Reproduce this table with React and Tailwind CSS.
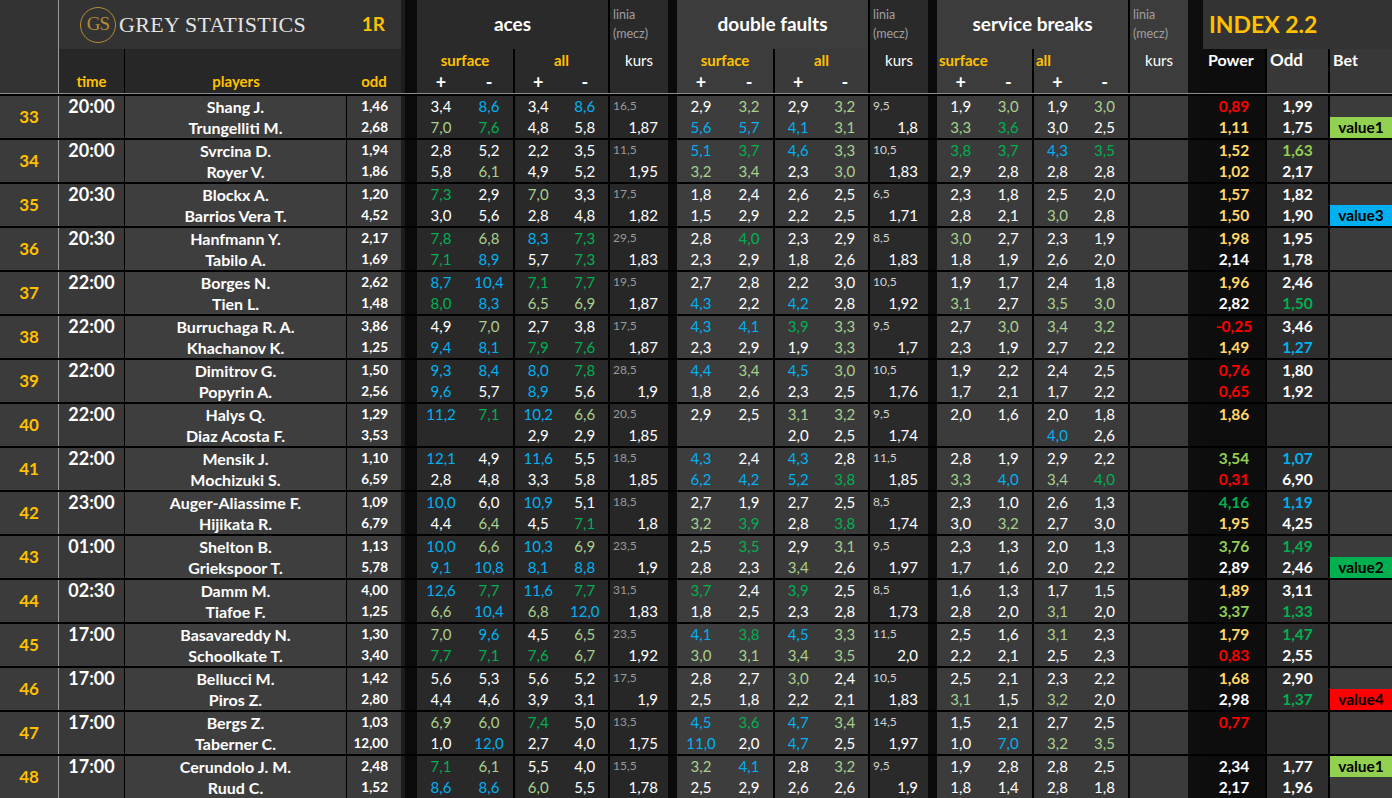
import React from "react";

const tone = {
  w: "text-white",
  b: "text-[#00b0f0]",
  l: "text-[#a9d08e]",
  g: "text-[#00b050]",
  r: "text-[#ff0000]",
  y: "text-[#ffd966]",
  k: "text-[#92d050]",
};

const betBg = {
  value1: "bg-[#92d050]",
  value2: "bg-[#00b050]",
  value3: "bg-[#00b0f0]",
  value4: "bg-[#ff0000]",
};

const matches = [
  { n: 33, time: "20:00", players: ["Shang J.", "Trungelliti M."], odd: ["1,46", "2,68"],
    aces: ["3,4w 8,6b 3,4w 8,6b", "7,0l 7,6g 4,8w 5,8w"], acesLine: ["16,5", "1,87"],
    df: ["2,9w 3,2l 2,9w 3,2l", "5,6b 5,7b 4,1b 3,1l"], dfLine: ["9,5", "1,8"],
    sb: ["1,9w 3,0l 1,9w 3,0l", "3,3l 3,6g 3,0w 2,5w"],
    power: ["0,89r", "1,11y"], index: ["1,99w", "1,75w"], bet: ["", "value1"] },
  { n: 34, time: "20:00", players: ["Svrcina D.", "Royer V."], odd: ["1,94", "1,86"],
    aces: ["2,8w 5,2w 2,2w 3,5w", "5,8w 6,1l 4,9w 5,2w"], acesLine: ["11,5", "1,95"],
    df: ["5,1b 3,7g 4,6b 3,3l", "3,2l 3,4l 2,3w 3,0l"], dfLine: ["10,5", "1,83"],
    sb: ["3,8g 3,7g 4,3b 3,5g", "2,9w 2,8w 2,8w 2,8w"],
    power: ["1,52y", "1,02y"], index: ["1,63k", "2,17w"], bet: ["", ""] },
  { n: 35, time: "20:30", players: ["Blockx A.", "Barrios Vera T."], odd: ["1,20", "4,52"],
    aces: ["7,3g 2,9w 7,0l 3,3w", "3,0w 5,6w 2,8w 4,8w"], acesLine: ["17,5", "1,82"],
    df: ["1,8w 2,4w 2,6w 2,5w", "1,5w 2,9w 2,2w 2,5w"], dfLine: ["6,5", "1,71"],
    sb: ["2,3w 1,8w 2,5w 2,0w", "2,8w 2,1w 3,0l 2,8w"],
    power: ["1,57y", "1,50y"], index: ["1,82w", "1,90w"], bet: ["", "value3"] },
  { n: 36, time: "20:30", players: ["Hanfmann Y.", "Tabilo A."], odd: ["2,17", "1,69"],
    aces: ["7,8g 6,8l 8,3b 7,3g", "7,1g 8,9b 5,7w 7,3g"], acesLine: ["29,5", "1,83"],
    df: ["2,8w 4,0g 2,3w 2,9w", "2,3w 2,9w 1,8w 2,6w"], dfLine: ["8,5", "1,83"],
    sb: ["3,0l 2,7w 2,3w 1,9w", "1,8w 1,9w 2,6w 2,0w"],
    power: ["1,98y", "2,14w"], index: ["1,95w", "1,78w"], bet: ["", ""] },
  { n: 37, time: "22:00", players: ["Borges N.", "Tien L."], odd: ["2,62", "1,48"],
    aces: ["8,7b 10,4b 7,1g 7,7g", "8,0g 8,3b 6,5l 6,9l"], acesLine: ["19,5", "1,87"],
    df: ["2,7w 2,8w 2,2w 3,0w", "4,3b 2,2w 4,2b 2,8w"], dfLine: ["10,5", "1,92"],
    sb: ["1,9w 1,7w 2,4w 1,8w", "3,1l 2,7w 3,5l 3,0l"],
    power: ["1,96y", "2,82w"], index: ["2,46w", "1,50g"], bet: ["", ""] },
  { n: 38, time: "22:00", players: ["Burruchaga R. A.", "Khachanov K."], odd: ["3,86", "1,25"],
    aces: ["4,9w 7,0l 2,7w 3,8w", "9,4b 8,1b 7,9g 7,6g"], acesLine: ["17,5", "1,87"],
    df: ["4,3b 4,1b 3,9g 3,3l", "2,3w 2,9w 1,9w 3,3l"], dfLine: ["9,5", "1,7"],
    sb: ["2,7w 3,0l 3,4l 3,2l", "2,3w 1,9w 2,7w 2,2w"],
    power: ["-0,25r", "1,49y"], index: ["3,46w", "1,27b"], bet: ["", ""] },
  { n: 39, time: "22:00", players: ["Dimitrov G.", "Popyrin A."], odd: ["1,50", "2,56"],
    aces: ["9,3b 8,4b 8,0b 7,8g", "9,6b 5,7w 8,9b 5,6w"], acesLine: ["28,5", "1,9"],
    df: ["4,4b 3,4l 4,5b 3,0l", "1,8w 2,6w 2,3w 2,5w"], dfLine: ["10,5", "1,76"],
    sb: ["1,9w 2,2w 2,4w 2,5w", "1,7w 2,1w 1,7w 2,2w"],
    power: ["0,76r", "0,65r"], index: ["1,80w", "1,92w"], bet: ["", ""] },
  { n: 40, time: "22:00", players: ["Halys Q.", "Diaz Acosta F."], odd: ["1,29", "3,53"],
    aces: ["11,2b 7,1g 10,2b 6,6l", "_ _ 2,9w 2,9w"], acesLine: ["20,5", "1,85"],
    df: ["2,9w 2,5w 3,1l 3,2l", "_ _ 2,0w 2,5w"], dfLine: ["9,5", "1,74"],
    sb: ["2,0w 1,6w 2,0w 1,8w", "_ _ 4,0b 2,6w"],
    power: ["1,86y", ""], index: ["", ""], bet: ["", ""] },
  { n: 41, time: "22:00", players: ["Mensik J.", "Mochizuki S."], odd: ["1,10", "6,59"],
    aces: ["12,1b 4,9w 11,6b 5,5w", "2,8w 4,8w 3,3w 5,8w"], acesLine: ["18,5", "1,85"],
    df: ["4,3b 2,4w 4,3b 2,8w", "6,2b 4,2b 5,2b 3,8g"], dfLine: ["11,5", "1,85"],
    sb: ["2,8w 1,9w 2,9w 2,2w", "3,3l 4,0b 3,4l 4,0g"],
    power: ["3,54k", "0,31r"], index: ["1,07b", "6,90w"], bet: ["", ""] },
  { n: 42, time: "23:00", players: ["Auger-Aliassime F.", "Hijikata R."], odd: ["1,09", "6,79"],
    aces: ["10,0b 6,0w 10,9b 5,1w", "4,4w 6,4l 4,5w 7,1g"], acesLine: ["18,5", "1,8"],
    df: ["2,7w 1,9w 2,7w 2,5w", "3,2l 3,9g 2,8w 3,8g"], dfLine: ["8,5", "1,74"],
    sb: ["2,3w 1,0w 2,6w 1,3w", "3,0w 3,2l 2,7w 3,0w"],
    power: ["4,16g", "1,95y"], index: ["1,19b", "4,25w"], bet: ["", ""] },
  { n: 43, time: "01:00", players: ["Shelton B.", "Griekspoor T."], odd: ["1,13", "5,78"],
    aces: ["10,0b 6,6l 10,3b 6,9l", "9,1b 10,8b 8,1b 8,8b"], acesLine: ["23,5", "1,9"],
    df: ["2,5w 3,5g 2,9w 3,1l", "2,8w 2,3w 3,4l 2,6w"], dfLine: ["9,5", "1,97"],
    sb: ["2,3w 1,3w 2,0w 1,3w", "1,7w 1,6w 2,0w 2,2w"],
    power: ["3,76k", "2,89w"], index: ["1,49g", "2,46w"], bet: ["", "value2"] },
  { n: 44, time: "02:30", players: ["Damm M.", "Tiafoe F."], odd: ["4,00", "1,25"],
    aces: ["12,6b 7,7g 11,6b 7,7g", "6,6l 10,4b 6,8l 12,0b"], acesLine: ["31,5", "1,83"],
    df: ["3,7g 2,4w 3,9g 2,5w", "1,8w 2,5w 2,3w 2,8w"], dfLine: ["8,5", "1,73"],
    sb: ["1,6w 1,3w 1,7w 1,5w", "2,8w 2,0w 3,1l 2,0w"],
    power: ["1,89y", "3,37k"], index: ["3,11w", "1,33g"], bet: ["", ""] },
  { n: 45, time: "17:00", players: ["Basavareddy N.", "Schoolkate T."], odd: ["1,30", "3,40"],
    aces: ["7,0l 9,6b 4,5w 6,5l", "7,7g 7,1g 7,6g 6,7l"], acesLine: ["23,5", "1,92"],
    df: ["4,1b 3,8g 4,5b 3,3l", "3,0l 3,1l 3,4l 3,5l"], dfLine: ["11,5", "2,0"],
    sb: ["2,5w 1,6w 3,1l 2,3w", "2,2w 2,1w 2,5w 2,3w"],
    power: ["1,79y", "0,83r"], index: ["1,47g", "2,55w"], bet: ["", ""] },
  { n: 46, time: "17:00", players: ["Bellucci M.", "Piros Z."], odd: ["1,42", "2,80"],
    aces: ["5,6w 5,3w 5,6w 5,2w", "4,4w 4,6w 3,9w 3,1w"], acesLine: ["17,5", "1,9"],
    df: ["2,8w 2,7w 3,0l 2,4w", "2,5w 1,8w 2,2w 2,1w"], dfLine: ["10,5", "1,83"],
    sb: ["2,5w 2,1w 2,3w 2,2w", "3,1l 1,5w 3,2l 2,0w"],
    power: ["1,68y", "2,98w"], index: ["2,90w", "1,37g"], bet: ["", "value4"] },
  { n: 47, time: "17:00", players: ["Bergs Z.", "Taberner C."], odd: ["1,03", "12,00"],
    aces: ["6,9l 6,0l 7,4g 5,0w", "1,0w 12,0b 2,7w 4,0w"], acesLine: ["13,5", "1,75"],
    df: ["4,5b 3,6g 4,7b 3,4l", "11,0b 2,0w 4,7b 2,5w"], dfLine: ["14,5", "1,97"],
    sb: ["1,5w 2,1w 2,7w 2,5w", "1,0w 7,0b 3,2l 3,5l"],
    power: ["0,77r", ""], index: ["", ""], bet: ["", ""] },
  { n: 48, time: "17:00", players: ["Cerundolo J. M.", "Ruud C."], odd: ["2,48", "1,52"],
    aces: ["7,1g 6,1l 5,5w 4,0w", "8,6b 8,6b 6,0l 5,5w"], acesLine: ["15,5", "1,78"],
    df: ["3,2l 4,1b 2,8w 3,2l", "2,5w 2,9w 2,6w 2,6w"], dfLine: ["9,5", "1,9"],
    sb: ["1,9w 2,8w 2,8w 2,5w", "1,8w 1,4w 2,8w 1,8w"],
    power: ["2,34w", "2,17w"], index: ["1,77w", "1,96w"], bet: ["value1", ""] },
];

function Num({ t, className = "" }) {
  if (!t || t === "_") return <div className={className} />;
  return <div className={`${className} ${tone[t.slice(-1)]}`}>{t.slice(0, -1)}</div>;
}

// two columns (+ / -) of one stat half, two player lines
function Pair({ lines, half, className }) {
  return (
    <div className={`flex flex-col ${className}`}>
      {lines.map((line, i) => (
        <div key={i} className="flex h-[21px] leading-[21px] text-[15px]">
          {line.split(" ").slice(half * 2, half * 2 + 2).map((t, j) => (
            <Num key={j} t={t} className="flex-1 text-center" />
          ))}
        </div>
      ))}
    </div>
  );
}

function Linia({ vals, top, className }) {
  return (
    <div className={`flex w-[60px] flex-col border-l-2 border-black ${className}`}>
      <div className={`h-[21px] pl-[3px] text-[12px] leading-[19px] ${top}`}>{vals[0]}</div>
      <div className="h-[21px] pr-[10px] text-right text-[15px] leading-[21px] text-white">{vals[1]}</div>
    </div>
  );
}

function MatchRow({ m }) {
  return (
    <div className="flex h-[44px] border-t-2 border-black">
      <div className="flex w-[59px] items-center justify-center border-r border-[#9a9a9a] bg-[#3b3b3b] text-[17px] font-bold text-[#ffc000]">
        {m.n}
      </div>
      <div className="w-[66px] border-r border-black bg-[#393939] text-center text-[18px] font-bold leading-[21px] text-white">
        {m.time}
      </div>
      <div className="flex w-[222px] flex-col border-r border-black bg-[#3e3e3e] text-center text-[16px] font-bold text-white">
        {m.players.map((p) => (
          <div key={p} className="h-[21px] leading-[21px]">{p}</div>
        ))}
      </div>
      <div className="flex w-[54px] flex-col bg-[#3b3b3b] pr-[13px] text-right text-[13.5px] font-bold text-white">
        {m.odd.map((o, i) => (
          <div key={i} className="h-[21px] leading-[21px]">{o}</div>
        ))}
      </div>
      <div className="w-[16px] border-l-4 border-[#1c1c1c] bg-[#0a0a0a]" />

      <Pair lines={m.aces} half={0} className="w-[96px] bg-[#292929]" />
      <Pair lines={m.aces} half={1} className="w-[95px] border-l-2 border-black bg-[#292929]" />
      <Linia vals={m.acesLine} top="text-[#9a9a9a]" className="bg-[#272727]" />
      <div className="w-[9px] bg-[#0a0a0a]" />

      <Pair lines={m.df} half={0} className="w-[96px] bg-[#3d3d3d]" />
      <Pair lines={m.df} half={1} className="w-[95px] border-l-2 border-black bg-[#3a3a3a]" />
      <Linia vals={m.dfLine} top="text-[#d4d4d4]" className="bg-[#2a2a2a]" />
      <div className="w-[9px] bg-[#0a0a0a]" />

      <Pair lines={m.sb} half={0} className="w-[95px] bg-[#3b3b3b]" />
      <Pair lines={m.sb} half={1} className="w-[96px] border-l-2 border-black bg-[#3b3b3b]" />
      <div className="w-[60px] border-l-2 border-black bg-[#3b3b3b]" />
      <div className="w-[15px] bg-[#0e0e0e]" />

      <div className="flex w-[62px] flex-col bg-[#0d0d0d] text-[15.5px] font-bold">
        {m.power.map((t, i) => (
          <Num key={i} t={t} className="h-[21px] text-center leading-[21px]" />
        ))}
      </div>
      <div className="flex w-[63px] flex-col border-l-2 border-black bg-[#2e2e2e] text-[15.5px] font-bold">
        {m.index.map((t, i) => (
          <Num key={i} t={t} className="h-[21px] text-center leading-[21px]" />
        ))}
      </div>
      <div className="flex w-[64px] flex-col border-l-2 border-black bg-[#3b3b3b]">
        {m.bet.map((b, i) => (
          <div
            key={i}
            className={`h-[21px] text-center text-[15.5px] font-bold leading-[21px] text-black ${b ? betBg[b] : ""}`}
          >
            {b}
          </div>
        ))}
      </div>
    </div>
  );
}

function SectionHead({ title, bg, subBgs, widths, labelAlign }) {
  return (
    <div className={`flex w-[191px] flex-col ${bg}`}>
      <div className="flex h-[49px] items-center justify-center text-[19px] font-bold text-white">{title}</div>
      <div className="flex flex-1">
        {["surface", "all"].map((s, i) => (
          <div key={s} className={`flex flex-col ${widths[i]} ${subBgs[i]} ${i ? "border-l-2 border-black" : ""}`}>
            <div className={`h-[22px] text-[15px] font-bold leading-[22px] text-[#ffc000] ${labelAlign}`}>{s}</div>
            <div className="flex h-[22px] text-[18px] font-bold leading-[22px] text-white">
              <span className="flex-1 text-center">+</span>
              <span className="flex-1 text-center">-</span>
            </div>
          </div>
        ))}
      </div>
    </div>
  );
}

function LiniaHead({ bg }) {
  return (
    <div className={`flex w-[60px] flex-col border-l-2 border-black ${bg}`}>
      <div className="h-[49px] pl-[3px] pt-[5px] text-[12.5px] leading-[19px] text-[#a0a0a0]">
        linia
        <br />
        (mecz)
      </div>
      <div className="h-[22px] text-center text-[15px] leading-[22px] text-white">kurs</div>
    </div>
  );
}

function Header() {
  return (
    <div className="flex h-[94px] border-b border-[#8c8c8c]">
      <div className="w-[59px] border-r border-[#9a9a9a] bg-[#333333]" />
      <div className="flex w-[342px] flex-col">
        <div className="flex h-[49px] items-center bg-[#333333]">
          <div className="ml-[21px] flex h-[36px] w-[36px] items-center justify-center rounded-full border-[1.5px] border-[#b38d36] font-[family-name:'Liberation_Serif',serif] text-[19px] tracking-[-1px] text-[#b38d36]">
            GS
          </div>
          <span className="ml-[3px] font-[family-name:'Liberation_Serif',serif] text-[22px] tracking-[0.3px] text-[#e4e4e4]">
            GREY STATISTICS
          </span>
          <span className="ml-auto mr-[16px] text-[19px] font-bold text-[#ffc000]">1R</span>
        </div>
        <div className="flex flex-1 bg-[#272727] text-[15px] font-bold text-[#ffc000]">
          <div className="flex w-[66px] items-end justify-center border-r border-black pb-[1px]">time</div>
          <div className="flex w-[222px] items-end justify-center pb-[1px]">players</div>
          <div className="flex w-[54px] items-end justify-center pb-[1px]">odd</div>
        </div>
      </div>
      <div className="w-[16px] border-l-4 border-[#1c1c1c] bg-[#0a0a0a]" />

      <SectionHead
        title="aces"
        bg="bg-[#2a2a2a]"
        subBgs={["bg-[#2a2a2a]", "bg-[#2a2a2a]"]}
        widths={["w-[96px]", "w-[95px]"]}
        labelAlign="text-center"
      />
      <LiniaHead bg="bg-[#2a2a2a]" />
      <div className="w-[9px] bg-[#0a0a0a]" />

      <SectionHead
        title="double faults"
        bg="bg-[#3c3c3c]"
        subBgs={["bg-[#3c3c3c]", "bg-[#3a3a3a]"]}
        widths={["w-[96px]", "w-[95px]"]}
        labelAlign="text-center"
      />
      <LiniaHead bg="bg-[#2a2a2a]" />
      <div className="w-[9px] bg-[#0a0a0a]" />

      <SectionHead
        title="service breaks"
        bg="bg-[#3c3c3c]"
        subBgs={["bg-[#3c3c3c]", "bg-[#3c3c3c]"]}
        widths={["w-[95px]", "w-[96px]"]}
        labelAlign="pl-[2px] text-left"
      />
      <LiniaHead bg="bg-[#3c3c3c]" />
      <div className="w-[15px] bg-[#0e0e0e]" />

      <div className="flex w-[189px] flex-col">
        <div className="flex h-[49px] items-center bg-[#333333] pl-[6px] text-[23px] font-bold text-[#ffc000]">
          INDEX 2.2
        </div>
        <div className="flex flex-1 text-[16px] font-bold leading-[22px] text-white">
          <div className="w-[62px] bg-[#0d0d0d] pl-[5px]">Power</div>
          <div className="w-[63px] border-l-2 border-black bg-[#383838] pl-[3px] text-[17px]">Odd</div>
          <div className="w-[64px] border-l-2 border-black bg-[#383838] pl-[3px]">Bet</div>
        </div>
      </div>
    </div>
  );
}

export default function App() {
  return (
    <div className="h-[798px] w-[1392px] overflow-hidden bg-black font-[family-name:Lato,sans-serif]">
      <Header />
      {matches.map((m) => (
        <MatchRow key={m.n} m={m} />
      ))}
    </div>
  );
}
